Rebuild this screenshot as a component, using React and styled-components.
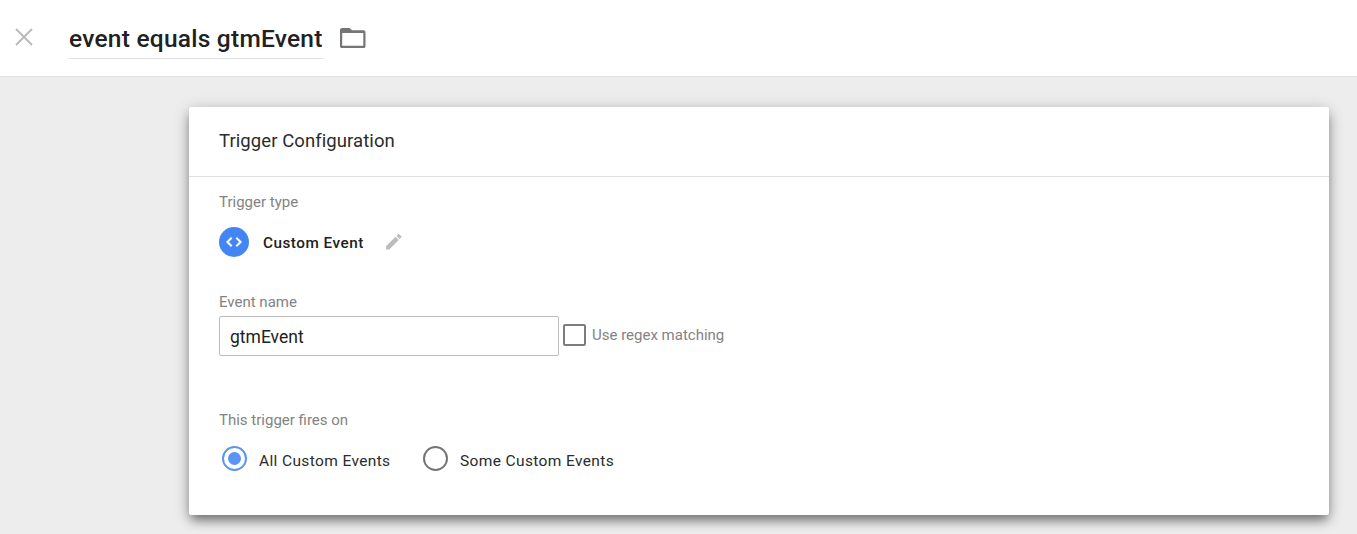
import React from "react";
import styled, { createGlobalStyle } from "styled-components";

const GlobalStyle = createGlobalStyle`
  * { box-sizing: border-box; }
  body {
    margin: 0;
    background: #ededed;
    color: #212121;
    font-family: Roboto, "Liberation Sans", sans-serif;
  }
`;

const Page = styled.div`
  height: 534px;
  overflow: hidden;
  background: #ededed;
`;

const Header = styled.header`
  display: flex;
  align-items: flex-start;
  height: 77px;
  background: #fff;
  border-bottom: 1px solid #e0e0e0;
`;

const IconButton = styled.button`
  display: block;
  flex: none;
  padding: 0;
  border: 0;
  background: none;
  color: ${(p) => p.$color};
  margin: ${(p) => p.$margin || 0};
  svg { display: block; }
`;

const Title = styled.h1`
  margin: 18px 0 0 36px;
  width: 254px;
  height: 41px;
  border-bottom: 1px solid #e0e0e0;
  font-size: 24.5px;
  font-weight: 500;
  line-height: 42px;
  letter-spacing: 0.24px;
  white-space: nowrap;
`;

const Card = styled.main`
  margin: 30px 28px 0 189px;
  height: 408px;
  background: #fff;
  border-radius: 2px;
  box-shadow: 0 7px 10px -2px rgba(0, 0, 0, 0.42), 0 3px 16px rgba(0, 0, 0, 0.24);
`;

const CardHeader = styled.div`
  height: 70px;
  padding-left: 30px;
  border-bottom: 1px solid #e0e0e0;
`;

const CardTitle = styled.h2`
  margin: 0;
  color: #2b2b2b;
  font-size: 18.5px;
  font-weight: 400;
  line-height: 68px;
  letter-spacing: 0.08px;
`;

const CardBody = styled.div`
  padding: 15px 30px 0;
`;

const Field = styled.section`
  height: ${(p) => p.$height}px;
`;

const Label = styled.div`
  height: 20px;
  font-size: 15px;
  line-height: 20px;
  color: #838383;
  white-space: nowrap;
`;

const TypeRow = styled.div`
  display: flex;
  align-items: center;
  height: 30px;
  margin-top: 15px;
`;

const TypeBadge = styled.span`
  display: grid;
  place-items: center;
  width: 30px;
  height: 30px;
  border-radius: 50%;
  background: #4285f4;
  color: #fff;
`;

const TypeName = styled.span`
  width: 101px;
  margin: 1px 0 0 14px;
  font-size: 15.3px;
  font-weight: 500;
  letter-spacing: 0.5px;
  white-space: nowrap;
`;

const InputRow = styled.div`
  display: flex;
  margin-top: 4px;
`;

const TextInput = styled.input`
  width: 340px;
  height: 40px;
  padding: 2px 10px 0;
  border: 1px solid #bdbdbd;
  border-radius: 2px;
  outline: 0;
  color: #212121;
  font: 400 17.5px Roboto, sans-serif;
`;

const CheckBox = styled.span`
  flex: none;
  width: 23px;
  height: 22px;
  margin: 8px 6px 0 4px;
  border: 2px solid #7d7d7d;
  border-radius: 2px;
`;

const CheckLabel = styled(Label)`
  margin-top: 9px;
`;

const RadioRow = styled.div`
  display: flex;
  margin: 16px 0 0 3px;
`;

const RadioOption = styled.div`
  display: flex;
  width: 201px;
`;

const RadioMark = styled.span`
  display: grid;
  place-items: center;
  flex: none;
  width: 25px;
  height: 25px;
  border: 2px solid ${(p) => (p.$checked ? "#5a95f5" : "#757575")};
  border-radius: 50%;
  &::after {
    content: "";
    width: 13px;
    height: 13px;
    border-radius: 50%;
    background: ${(p) => (p.$checked ? "#5a95f5" : "transparent")};
  }
`;

const RadioText = styled.span`
  margin: 5px 0 0 12px;
  color: #2b2b2b;
  font-size: 15.5px;
  line-height: 20px;
  letter-spacing: 0.37px;
  white-space: nowrap;
`;

export default function App() {
  return (
    <Page>
      <GlobalStyle />
      <Header>
        <IconButton $color="#bababa" $margin="28px 0 0 15px" aria-label="Close">
          <svg width="18" height="18" viewBox="0 0 18 18" fill="none" stroke="currentColor" strokeWidth="2">
            <path d="M1 1L17 17M17 1L1 17" />
          </svg>
        </IconButton>
        <Title>event equals gtmEvent</Title>
        <IconButton $color="#757575" $margin="28px 0 0 17px" aria-label="Folder">
          <svg width="26" height="20" viewBox="0 0 26 20">
            <path
              fill="currentColor"
              fillRule="evenodd"
              d="M2 0H9.5L12 2.3H23.5C24.9 2.3 25.5 3.1 25.5 4.4V18C25.5 19.4 24.9 20 23.5 20H2C.7 20 0 19.4 0 18V2C0 .7.7 0 2 0ZM2.2 5V17.8H23.3V5Z"
            />
          </svg>
        </IconButton>
      </Header>
      <Card>
        <CardHeader>
          <CardTitle>Trigger Configuration</CardTitle>
        </CardHeader>
        <CardBody>
          <Field $height={100}>
            <Label>Trigger type</Label>
            <TypeRow>
              <TypeBadge>
                <svg width="18" height="12" viewBox="0 0 18 12" fill="none" stroke="currentColor" strokeWidth="2">
                  <path d="M6.7 1.7L2.4 6L6.7 10.3M11.3 1.7L15.6 6L11.3 10.3" />
                </svg>
              </TypeBadge>
              <TypeName>Custom Event</TypeName>
              <IconButton $color="#bdbdbd" $margin="0 0 0 22px" aria-label="Edit">
                <svg width="15.5" height="15.5" viewBox="3 3 18 18" fill="currentColor">
                  <path d="M3 17.25V21h3.75L17.81 9.94l-3.75-3.75L3 17.25zM20.71 7.04a1 1 0 0 0 0-1.41l-2.34-2.34a1 1 0 0 0-1.41 0l-1.83 1.83 3.75 3.75 1.83-1.83z" />
                </svg>
              </IconButton>
            </TypeRow>
          </Field>
          <Field $height={118}>
            <Label>Event name</Label>
            <InputRow>
              <TextInput defaultValue="gtmEvent" aria-label="Event name" />
              <CheckBox role="checkbox" aria-checked="false" />
              <CheckLabel>Use regex matching</CheckLabel>
            </InputRow>
          </Field>
          <Field $height={80}>
            <Label>This trigger fires on</Label>
            <RadioRow>
              <RadioOption>
                <RadioMark $checked />
                <RadioText>All Custom Events</RadioText>
              </RadioOption>
              <RadioOption>
                <RadioMark />
                <RadioText>Some Custom Events</RadioText>
              </RadioOption>
            </RadioRow>
          </Field>
        </CardBody>
      </Card>
    </Page>
  );
}
